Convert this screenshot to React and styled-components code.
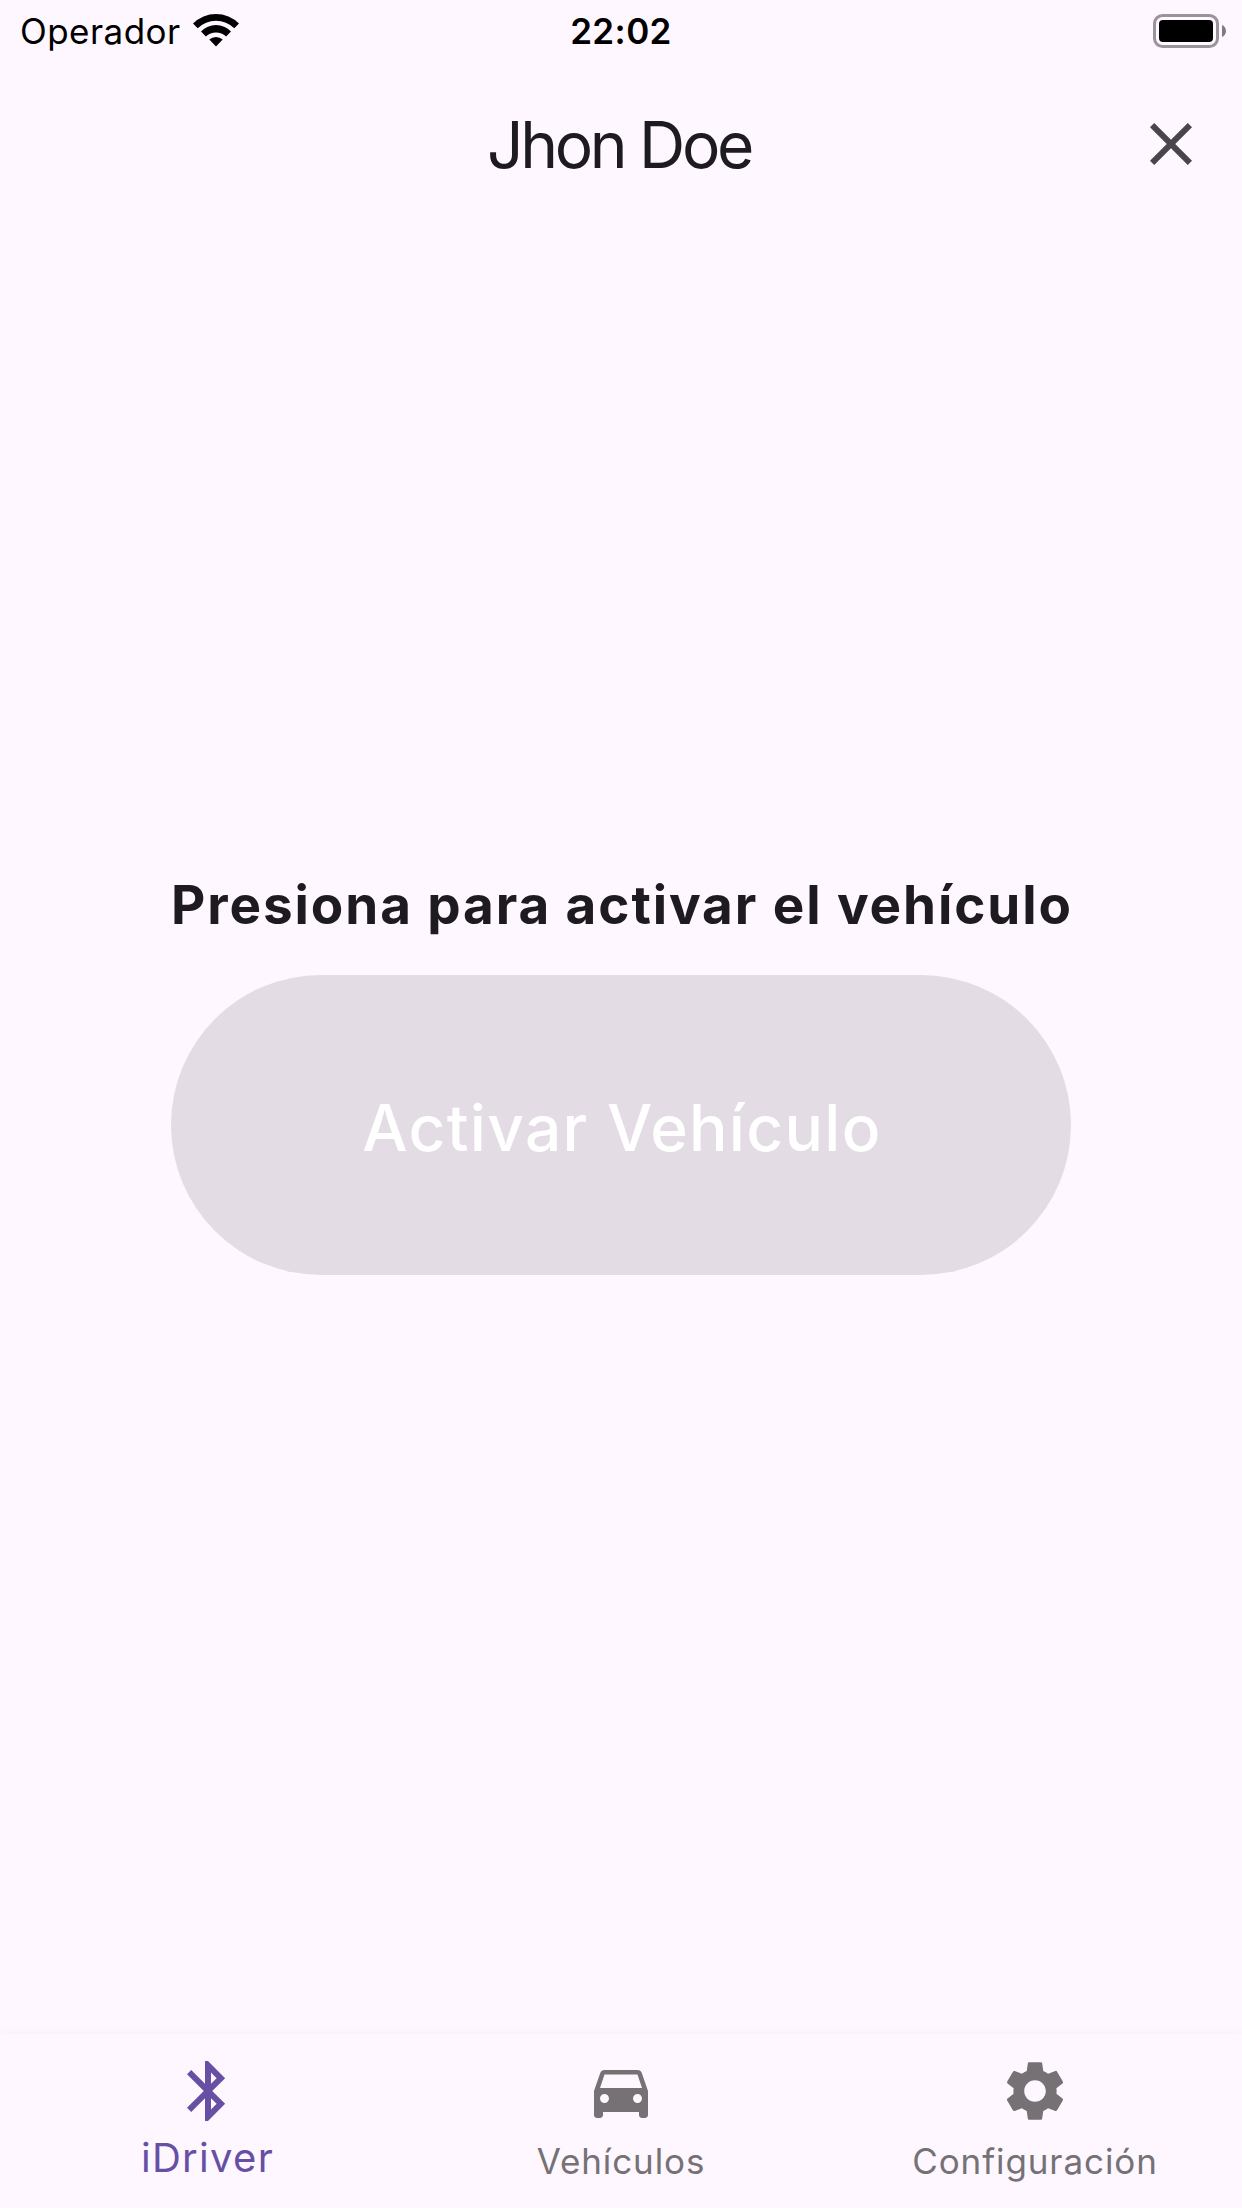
import React from 'react';
import styled, { createGlobalStyle } from 'styled-components';
import { MdBluetooth, MdClose, MdDirectionsCar, MdSettings } from 'react-icons/md';

const tabs = [
  { label: 'iDriver', icon: MdBluetooth, active: true },
  { label: 'Vehículos', icon: MdDirectionsCar },
  { label: 'Configuración', icon: MdSettings },
];

const App = () => {
  return (
    <>
      <GlobalStyle />
      <Screen>
        <StatusBar>
          <Carrier>
            Operador
            <svg width="46" height="34" viewBox="0 0 46 34">
              <path d="M0 9.6A32.4 32.4 0 0 1 46 9.6L41.3 14.3A25.8 25.8 0 0 0 4.7 14.3Z" />
              <path d="M8 17.4A21 21 0 0 1 38 17.4L33.1 22.6A14.4 14.4 0 0 0 12.9 22.6Z" />
              <path d="M16.3 25.6A9.6 9.6 0 0 1 29.7 25.6L23 32.6Z" />
            </svg>
          </Carrier>
          <Clock>22:02</Clock>
          <Battery>
            <svg width="74" height="34" viewBox="0 0 74 34">
              <rect x="1.5" y="1.5" width="63" height="31" rx="8" fill="none" stroke="#99949a" strokeWidth="3" />
              <rect x="6" y="6" width="54" height="22" rx="4" />
              <path d="M69 11C74.3 13.2 74.3 20.8 69 23Z" fill="#7f7b80" />
            </svg>
          </Battery>
        </StatusBar>
        <AppBar>
          <Title>Jhon Doe</Title>
          <CloseButton type="button">
            <MdClose />
          </CloseButton>
        </AppBar>
        <Main>
          <Heading>Presiona para activar el vehículo</Heading>
          <ActivateButton type="button">Activar Vehículo</ActivateButton>
        </Main>
        <BottomNav>
          {tabs.map(({ label, icon: Icon, active }) => (
            <Tab key={label} $active={active}>
              <Icon />
              <span>{label}</span>
            </Tab>
          ))}
        </BottomNav>
      </Screen>
    </>
  );
};

const GlobalStyle = createGlobalStyle`
  * {
    box-sizing: border-box;
  }
  body {
    margin: 0;
    background: #fef7ff;
    font-family: Inter, 'Liberation Sans', sans-serif;
  }
  button {
    border: none;
    padding: 0;
    font-family: inherit;
  }
`;

const Screen = styled.div`
  width: 1242px;
  height: 2208px;
  display: flex;
  flex-direction: column;
  background: #fef7ff;
  overflow: hidden;
`;

const StatusBar = styled.header`
  height: 60px;
  display: grid;
  grid-template-columns: 1fr auto 1fr;
  align-items: center;
  color: #000;
  font-size: 35px;
  line-height: 62px;
`;

const Carrier = styled.div`
  display: flex;
  align-items: center;
  gap: 12px;
  padding-left: 20px;
  letter-spacing: 0.45px;
`;

const Clock = styled.div`
  font-weight: 600;
  letter-spacing: 0.4px;
`;

const Battery = styled.div`
  display: flex;
  justify-content: flex-end;
  padding-right: 15px;
`;

const AppBar = styled.div`
  height: 168px;
  display: grid;
  grid-template-columns: 1fr auto 1fr;
  align-items: center;
`;

const Title = styled.h1`
  grid-column: 2;
  margin: 0;
  padding: 2px 4px 0 0;
  color: #1d1b20;
  font-size: 64px;
  font-weight: 400;
  line-height: 84px;
  letter-spacing: -3.3px;
`;

const CloseButton = styled.button`
  justify-self: end;
  height: 72px;
  margin-right: 35px;
  background: transparent;
  color: #49454f;
  svg {
    display: block;
    width: 72px;
    height: 72px;
  }
`;

const Main = styled.main`
  flex: 1;
  display: flex;
  flex-direction: column;
  align-items: center;
  padding-top: 645px;
`;

const Heading = styled.h2`
  margin: 0 0 38px;
  padding-left: 2px;
  color: #1d1b20;
  font-size: 53px;
  font-weight: 700;
  line-height: 64px;
  letter-spacing: 1.9px;
  white-space: nowrap;
`;

const ActivateButton = styled.button`
  width: 900px;
  height: 300px;
  padding: 4px 0 0 2px;
  border-radius: 150px;
  background: #e3dce4;
  color: #fff;
  font-size: 64px;
  font-weight: 500;
  letter-spacing: 1.3px;
`;

const BottomNav = styled.nav`
  height: 174px;
  display: grid;
  grid-template-columns: repeat(3, 1fr);
  background: #fef7ff;
  box-shadow: 0 -2px 12px rgba(0, 0, 0, 0.03);
`;

const Tab = styled.a`
  display: flex;
  flex-direction: column;
  align-items: center;
  padding-top: 21px;
  padding-left: ${({ $active }) => ($active ? '1px' : '0')};
  color: ${({ $active }) => ($active ? '#6750a4' : '#757175')};
  font-size: ${({ $active }) => ($active ? '40px' : '35px')};
  letter-spacing: ${({ $active }) => ($active ? '1.3px' : '0.9px')};
  svg {
    width: 72px;
    height: 72px;
  }
  span {
    margin-top: ${({ $active }) => ($active ? '7px' : '10px')};
    line-height: 48px;
  }
`;

export default App;
